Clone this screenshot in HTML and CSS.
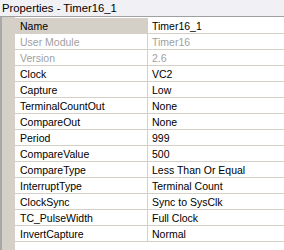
FILE: index.html
```html
<!DOCTYPE html>
<html lang="en">
<head>
    <meta charset="UTF-8">
    <title>Properties - Timer16_1</title>
    <link rel="stylesheet" href="styles.css">
</head>
<body>
    <div class="panel">
        <div class="title">Properties - Timer16_1</div>
        <div class="body">
            <div class="gutter"></div>
            <div class="grid">
                <div class="row selected"><div class="name">Name</div><div class="value">Timer16_1</div></div>
                <div class="row disabled"><div class="name">User Module</div><div class="value">Timer16</div></div>
                <div class="row disabled"><div class="name">Version</div><div class="value">2.6</div></div>
                <div class="row"><div class="name">Clock</div><div class="value">VC2</div></div>
                <div class="row"><div class="name">Capture</div><div class="value">Low</div></div>
                <div class="row"><div class="name">TerminalCountOut</div><div class="value">None</div></div>
                <div class="row"><div class="name">CompareOut</div><div class="value">None</div></div>
                <div class="row"><div class="name">Period</div><div class="value">999</div></div>
                <div class="row"><div class="name">CompareValue</div><div class="value">500</div></div>
                <div class="row"><div class="name">CompareType</div><div class="value">Less Than Or Equal</div></div>
                <div class="row"><div class="name">InterruptType</div><div class="value">Terminal Count</div></div>
                <div class="row"><div class="name">ClockSync</div><div class="value">Sync to SysClk</div></div>
                <div class="row"><div class="name">TC_PulseWidth</div><div class="value">Full Clock</div></div>
                <div class="row"><div class="name">InvertCapture</div><div class="value">Normal</div></div>
            </div>
        </div>
    </div>
</body>
</html>
```

FILE: styles.css
```css
body {
    margin: 0;
    padding: 0;
    font-family: 'Liberation Sans', Arial, sans-serif;
    background-color: white;
    color: black;
}
.panel {
    width: 284px;
    height: 250px;
    display: flex;
    flex-direction: column;
    overflow: hidden;
}
.title {
    height: 16px;
    line-height: 16px;
    padding-left: 2px;
    font-size: 11.3px;
    background-color: #f0f0f5;
    border-bottom: 1px solid #a0a0a0;
}
.body {
    flex: 1;
    display: flex;
}
.gutter {
    width: 13px;
    background-color: #d4d0c8;
    border-left: 2px solid #a8a8a8;
}
.grid {
    flex: 1;
    padding-top: 1px;
    background-color: white;
}
.row {
    display: flex;
    height: 15px;
    line-height: 16px;
    font-size: 10.5px;
    border-bottom: 1px solid #d4d0c8;
}
.name {
    width: 127px;
    padding-left: 5px;
    border-right: 1px solid #d4d0c8;
    white-space: nowrap;
}
.value {
    flex: 1;
    padding-left: 4px;
    white-space: nowrap;
}
.selected .name {
    background-color: #d4d0c8;
}
.disabled {
    color: #a0a0a0;
}
```
